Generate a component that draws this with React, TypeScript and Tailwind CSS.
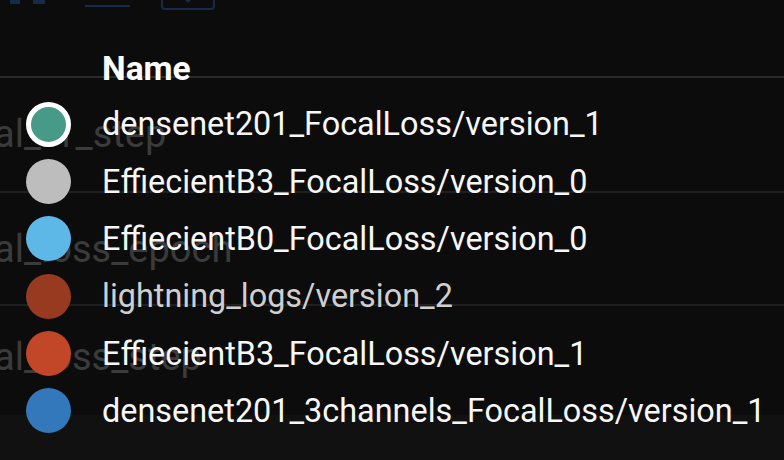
import React from "react";

const rows: { name: string; color: string; ring?: boolean; dim?: boolean }[] = [
  { name: "densenet201_FocalLoss/version_1", color: "#489a88", ring: true },
  { name: "EffiecientB3_FocalLoss/version_0", color: "#bdbdbd" },
  { name: "EffiecientB0_FocalLoss/version_0", color: "#5db8e8" },
  { name: "lightning_logs/version_2", color: "#973a1f", dim: true },
  { name: "EffiecientB3_FocalLoss/version_1", color: "#c24628" },
  { name: "densenet201_3channels_FocalLoss/version_1", color: "#3478bc" },
];

export default function App() {
  return (
    <div
      className="relative w-[784px] h-[460px] overflow-hidden bg-[#0c0c0c]"
      style={{ fontFamily: "Roboto, 'Liberation Sans', sans-serif" }}
    >
      {/* background page */}
      <div className="flex flex-col h-full">
        <div className="h-[10px]">
          <svg width="784" height="10" viewBox="0 0 784 10">
            <rect x="10" y="0" width="10" height="4" fill="#162b48" />
            <rect x="33" y="0" width="12" height="4" fill="#162b48" />
            <rect x="85" y="5" width="45" height="2" fill="#162b48" />
            <path
              d="M162 -4 V6 Q162 9 165 9 H211 Q214 9 214 6 V-4"
              fill="none"
              stroke="#162b48"
              strokeWidth="2"
            />
            <path d="M185 0 L188 3 L191 0 Z" fill="#162b48" />
          </svg>
        </div>
        <div className="h-[66px]" />
        <div className="h-[2px] bg-[#2b2b2b]" />
        <div className="h-[113px] pt-[38px]">
          <div className="ml-[-6px] text-[38px] leading-[37px] text-[#3b3b3b] whitespace-nowrap">
            al_f1_step
          </div>
        </div>
        <div className="h-[2px] bg-[#1f1f1f]" />
        <div className="h-[111px] pt-[38px]">
          <div className="ml-[-6px] text-[38px] leading-[37px] text-[#3b3b3b] whitespace-nowrap">
            al_loss_epoch
          </div>
        </div>
        <div className="h-[2px] bg-[#1f1f1f]" />
        <div className="h-[109px] pt-[33px]">
          <div className="ml-[-6px] text-[38px] leading-[37px] text-[#3b3b3b] whitespace-nowrap">
            al_loss_step
          </div>
        </div>
        <div className="flex-1 bg-[#111111]" />
      </div>

      {/* tooltip overlay */}
      <div className="absolute inset-0 pt-[52px] flex flex-col">
        <div className="pl-[102px] h-[33px] text-[33.5px] leading-[33px] font-bold text-white">
          Name
        </div>
        <div className="mt-[10.6px] flex flex-col">
          {rows.map((r) => (
            <div key={r.name} className="flex items-center h-[57.35px]">
              <div
                className={
                  r.ring
                    ? "ml-[26px] w-[45px] h-[45px] rounded-full border-[5px] border-white box-border shrink-0"
                    : "ml-[26px] w-[45px] h-[45px] rounded-full shrink-0"
                }
                style={{ backgroundColor: r.color }}
              />
              <span
                className={
                  r.dim
                    ? "ml-[31px] text-[32.4px] leading-[32px] text-[#cfcfcf] whitespace-nowrap"
                    : "ml-[31px] text-[32.4px] leading-[32px] text-[#f7f7f7] whitespace-nowrap"
                }
              >
                {r.name}
              </span>
            </div>
          ))}
        </div>
      </div>
    </div>
  );
}
